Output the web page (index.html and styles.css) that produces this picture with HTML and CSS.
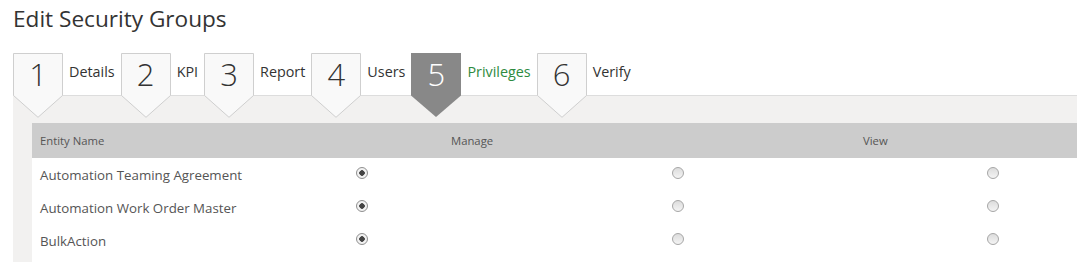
FILE: index.html
```html
<!DOCTYPE html>
<html>
<head>
  <title>Edit Security Groups</title>
  <link rel="stylesheet" href="styles.css">
</head>
<body>
  <div class="page">
    <h1 class="title">Edit Security Groups</h1>

    <div class="steps">
      <div class="step"><svg class="shape" viewBox="0 0 50 65"><polygon points="0.5,0.5 49.5,0.5 49.5,42.5 25,64.3 0.5,42.5"/></svg><span class="num">1</span></div>
      <span class="step-label">Details</span>
      <div class="step"><svg class="shape" viewBox="0 0 50 65"><polygon points="0.5,0.5 49.5,0.5 49.5,42.5 25,64.3 0.5,42.5"/></svg><span class="num">2</span></div>
      <span class="step-label">KPI</span>
      <div class="step"><svg class="shape" viewBox="0 0 50 65"><polygon points="0.5,0.5 49.5,0.5 49.5,42.5 25,64.3 0.5,42.5"/></svg><span class="num">3</span></div>
      <span class="step-label">Report</span>
      <div class="step"><svg class="shape" viewBox="0 0 50 65"><polygon points="0.5,0.5 49.5,0.5 49.5,42.5 25,64.3 0.5,42.5"/></svg><span class="num">4</span></div>
      <span class="step-label">Users</span>
      <div class="step active"><svg class="shape" viewBox="0 0 50 65"><polygon points="0,0 50,0 50,42.5 25,64 0,42.5"/></svg><span class="num">5</span></div>
      <span class="step-label current">Privileges</span>
      <div class="step"><svg class="shape" viewBox="0 0 50 65"><polygon points="0.5,0.5 49.5,0.5 49.5,42.5 25,64.3 0.5,42.5"/></svg><span class="num">6</span></div>
      <span class="step-label">Verify</span>
    </div>

    <div class="panel">
      <div class="table">
        <div class="table-head">
          <span>Entity Name</span>
          <span>Manage</span>
          <span>View</span>
        </div>
        <div class="table-row">
          <span class="name">Automation Teaming Agreement</span>
          <span class="cell"><i class="radio checked"></i></span>
          <span class="cell"><i class="radio"></i></span>
          <span class="cell"><i class="radio"></i></span>
        </div>
        <div class="table-row">
          <span class="name">Automation Work Order Master</span>
          <span class="cell"><i class="radio checked"></i></span>
          <span class="cell"><i class="radio"></i></span>
          <span class="cell"><i class="radio"></i></span>
        </div>
        <div class="table-row">
          <span class="name">BulkAction</span>
          <span class="cell"><i class="radio checked"></i></span>
          <span class="cell"><i class="radio"></i></span>
          <span class="cell"><i class="radio"></i></span>
        </div>
      </div>
    </div>
  </div>
</body>
</html>
```

FILE: styles.css
```css
body {
  margin: 0;
  padding: 0;
  font-family: 'Open Sans', 'Noto Sans', sans-serif;
  background: white;
  overflow: hidden;
}
.page {
  padding-left: 13px;
}
.title {
  margin: 4px 0 20px;
  font-size: 22.6px;
  line-height: 29px;
  font-weight: normal;
  color: #333;
}
.steps {
  display: flex;
  height: 42px;
  border-bottom: 1px solid #ddd;
}
.step {
  position: relative;
  z-index: 1;
  width: 50px;
  height: 42px;
  flex-shrink: 0;
  text-align: center;
}
.shape {
  position: absolute;
  left: 0;
  top: 0;
  width: 50px;
  height: 65px;
}
.shape polygon {
  fill: #f9f9f9;
  stroke: #cfcfcf;
  stroke-width: 1;
}
.step.active .shape polygon {
  fill: #888;
  stroke: none;
}
.num {
  position: relative;
  display: block;
  font-size: 31px;
  font-weight: 300;
  line-height: 42px;
  color: #333;
}
.step.active .num {
  color: white;
}
.step-label {
  padding: 9px 6px 0;
  font-size: 14.35px;
  line-height: 20px;
  color: #333;
}
.step-label.current {
  color: #2e8b3f;
}
.panel {
  background: #f2f1f0;
  padding: 27px 0 0 19px;
  min-height: 140px;
}
.table {
  background: white;
  min-height: 140px;
}
.table-head {
  display: grid;
  grid-template-columns: 411px 412px 1fr;
  height: 35px;
  align-items: center;
  background: #ccc;
  font-size: 11.3px;
  color: #555;
}
.table-head span {
  padding-left: 8px;
}
.table-row {
  display: grid;
  grid-template-columns: 324px 316px 315px 1fr;
  height: 33px;
  align-items: center;
  font-size: 13.3px;
  color: #555;
}
.name {
  padding-left: 8px;
  white-space: nowrap;
}
.cell {
  display: flex;
  align-items: center;
  margin-top: -3px;
}
.radio {
  box-sizing: border-box;
  width: 12px;
  height: 12px;
  border-radius: 50%;
  border: 1px solid #a6a6a6;
  background: linear-gradient(#dcdcdc, #f4f4f4);
}
.radio.checked {
  background: radial-gradient(circle, #444 0 2.5px, #f2f2f2 3px);
  border-color: #8f8f8f;
}
```
